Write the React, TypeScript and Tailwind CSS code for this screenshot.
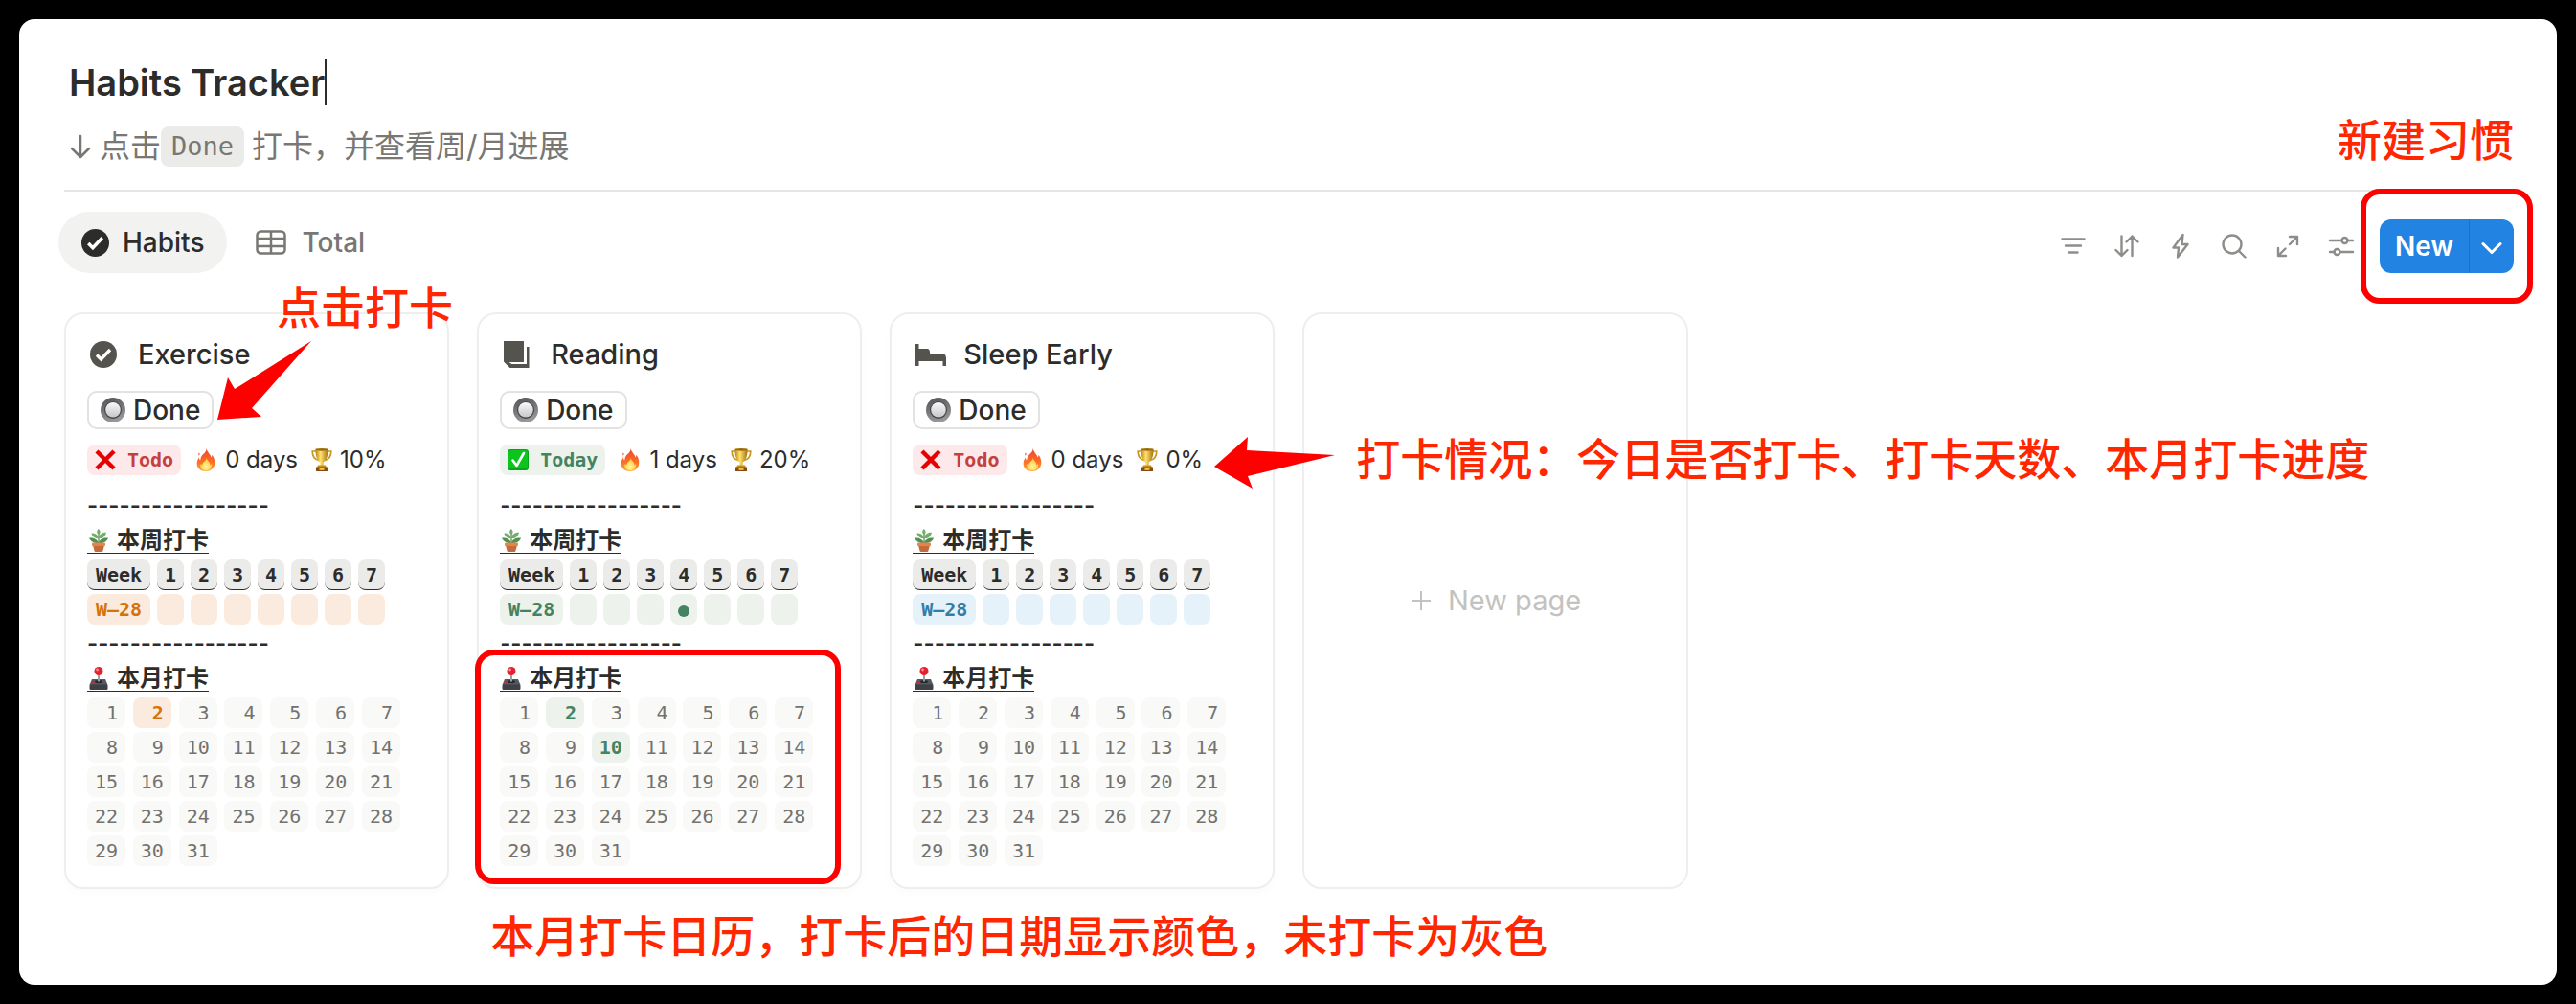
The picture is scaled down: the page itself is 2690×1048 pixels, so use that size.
import React from 'react';

type Tone = 'orange' | 'green' | 'blue';

interface Habit {
  name: string;
  icon: 'check' | 'book' | 'bed';
  done: boolean;
  days: number;
  progress: string;
  tone: Tone;
  weekMarks: number[];
  monthMarks: number[];
}

const habits: Habit[] = [
  { name: 'Exercise', icon: 'check', done: false, days: 0, progress: '10%', tone: 'orange', weekMarks: [], monthMarks: [2] },
  { name: 'Reading', icon: 'book', done: true, days: 1, progress: '20%', tone: 'green', weekMarks: [4], monthMarks: [2, 10] },
  { name: 'Sleep Early', icon: 'bed', done: false, days: 0, progress: '0%', tone: 'blue', weekMarks: [], monthMarks: [] },
];

const toneClass: Record<Tone, string> = {
  orange: 'bg-[#fbebde] text-[#d5730b]',
  green: 'bg-[#edf3ec] text-[#448361]',
  blue: 'bg-[#e5f2f9] text-[#337ea9]',
};

const weekDays = [1, 2, 3, 4, 5, 6, 7];
const monthDays = Array.from({ length: 31 }, (_, i) => i + 1);

const sans = "font-['Inter','Noto_Sans_CJK_SC',sans-serif]";
const mono = "font-['DejaVu_Sans_Mono','Noto_Sans_CJK_SC',monospace]";
const note = "font-['Noto_Sans_CJK_SC',sans-serif] text-[46px] leading-[56px] font-medium whitespace-nowrap text-[#ff2600]";

function CheckCircle({ className }: { className: string }) {
  return (
    <svg viewBox="0 0 28 28" className={className} aria-hidden="true">
      <circle cx="14" cy="14" r="14" fill="currentColor" />
      <path d="M7 14.500l4.500 4.500L21 9" fill="none" stroke="#fff" strokeWidth="3.400" />
    </svg>
  );
}

function HabitIcon({ icon }: { icon: Habit['icon'] }) {
  if (icon === 'check') return <CheckCircle className="h-7 w-7 text-[#55534e]" />;
  if (icon === 'book')
    return (
      <svg viewBox="0 0 28 28" className="h-7 w-7" fill="#55534e" aria-hidden="true">
        <path d="M1 0h21v22H6.500l3 2H25V6h2.500v22H7.500L1 21.500z" />
      </svg>
    );
  return (
    <svg viewBox="0 0 32 28" className="h-7 w-8" fill="#55534e" aria-hidden="true">
      <path d="M0 3h3.500v5H12c2 0 3 1.200 3.200 5H27c3.500 0 5 1.500 5 5v8h-3.500v-5H3.500v5H0z" />
    </svg>
  );
}

function RadioEmoji() {
  return (
    <svg viewBox="0 0 26 26" className="h-[26px] w-[26px]" aria-hidden="true">
      <defs>
        <linearGradient id="ring" x1="0" y1="0" x2="0.3" y2="1">
          <stop offset="0" stopColor="#505052" />
          <stop offset="1" stopColor="#98989b" />
        </linearGradient>
        <linearGradient id="knob" x1="0" y1="0" x2="0" y2="1">
          <stop offset="0" stopColor="#fafafa" />
          <stop offset="1" stopColor="#c6c6c9" />
        </linearGradient>
      </defs>
      <circle cx="13" cy="13" r="13" fill="url(#ring)" />
      <circle cx="13" cy="13" r="9" fill="#47474a" />
      <circle cx="13" cy="12.700" r="7.800" fill="url(#knob)" />
    </svg>
  );
}

function CrossEmoji() {
  return (
    <svg viewBox="0 0 22 22" className="h-[22px] w-[22px]" aria-hidden="true">
      <path d="M2 2l18 18M20 2L2 20" stroke="#e60000" strokeWidth="4.400" fill="none" />
    </svg>
  );
}

function TickEmoji() {
  return (
    <svg viewBox="0 0 22 22" className="h-[22px] w-[22px]" aria-hidden="true">
      <rect width="22" height="22" rx="3" fill="#06a51a" />
      <rect x="1" y="1" width="20" height="19" rx="2.500" fill="#0bc41c" />
      <path d="M5.500 11.500l4 5.500 7.500-13" fill="none" stroke="#fff" strokeWidth="2.600" strokeLinecap="round" strokeLinejoin="round" />
    </svg>
  );
}

function FireEmoji() {
  return (
    <svg viewBox="0 0 20 24" className="h-6 w-5" aria-hidden="true">
      <defs>
        <linearGradient id="flame" x1="0" y1="0" x2="0" y2="1">
          <stop offset="0" stopColor="#f0432a" />
          <stop offset="0.600" stopColor="#fb6f27" />
          <stop offset="1" stopColor="#ffab35" />
        </linearGradient>
        <radialGradient id="core" cx="0.500" cy="0.700" r="0.600">
          <stop offset="0" stopColor="#fff6a0" />
          <stop offset="1" stopColor="#ffc93c" />
        </radialGradient>
      </defs>
      <path d="M10.500 0c1.200 4.500 4.300 6 5.200 9.500.6-.8.800-1.600.6-2.800 2.300 2.500 3.400 6 2.900 9.600C18.600 21 15 24 10 24S1 21.300.7 16.500c-.2-3 .8-5 2.200-7 .1 1.500.5 2.300 1.300 3C4.800 9.500 4.900 8.500 7 6.300 9 4.300 10.800 3 10.500 0z" fill="url(#flame)" />
      <path d="M3 4.500c.8 1 .7 2-.2 3-.9-1-.7-2 .2-3z" fill="#f0432a" />
      <path d="M10.800 10c.3 3 3.600 3.800 3.700 7.500.7-.4 1-1 1.200-1.800 1 3.800-1 7.500-5.500 7.500S3.600 19.800 4.400 16c.5.900.9 1.300 1.700 1.600C6.500 14 10 13.500 10.800 10z" fill="url(#core)" />
    </svg>
  );
}

function TrophyEmoji() {
  return (
    <svg viewBox="0 0 22 24" className="h-6 w-[22px]" aria-hidden="true">
      <defs>
        <linearGradient id="gold" x1="0" y1="0" x2="1" y2="0">
          <stop offset="0" stopColor="#b98310" />
          <stop offset="0.400" stopColor="#ffe36d" />
          <stop offset="1" stopColor="#a8700c" />
        </linearGradient>
      </defs>
      <path d="M5 3H1.200c0 5 2 8.500 6.800 9.500M17 3h3.800c0 5-2 8.500-6.800 9.500" fill="none" stroke="#c9951c" strokeWidth="1.700" />
      <path d="M4.500.5h13c.3 7-1.500 12.500-4.800 14v3.500H9.300v-3.500C6 13 4.200 7.500 4.500.5z" fill="url(#gold)" />
      <ellipse cx="11" cy="1.400" rx="6.500" ry="1.300" fill="#9b6a0d" />
      <path d="M7 17.500h8l1 2.500H6z" fill="#c58f1a" />
      <path d="M5 19.500h12V24H5z" fill="#8a4b16" />
      <path d="M8.500 20.800h5v2h-5z" fill="#f0c84a" />
    </svg>
  );
}

function PlantEmoji() {
  return (
    <svg viewBox="0 0 22 24" className="h-6 w-[22px]" aria-hidden="true">
      <path d="M11 16V3" stroke="#4f8a48" strokeWidth="1.200" />
      <g fill="#74ad68">
        <path d="M11 6C8.500 4.500 8.800 1.800 10.800 0c2.200 1.800 2.500 4.500.2 6z" />
        <path d="M11 10C8 10.500 4.500 9 3.500 4.500 7.500 4.300 10.500 6.500 11 10z" />
        <path d="M11 10c.3-4 3.200-6.500 8-6.300C18 8 15 10.500 11 10z" />
      </g>
      <g fill="#4f9150">
        <path d="M11 15C7.500 15.500 3 14 1 9.500c4.500-.5 9 1.500 10 5.500z" />
        <path d="M11 15c.5-4 5-6 10-5.500C19.500 14 15 15.500 11 15z" />
      </g>
      <path d="M5 17h12l-1.600 6.200c-.2.500-.5.800-1 .8H7.600c-.5 0-.8-.3-1-.8z" fill="#c66a38" />
      <rect x="4" y="14.500" width="14" height="3.500" rx="1" fill="#e08550" />
    </svg>
  );
}

function JoystickEmoji() {
  return (
    <svg viewBox="0 0 22 24" className="h-6 w-[22px]" aria-hidden="true">
      <path d="M4 13h14l2.500 6H1.500z" fill="#55595f" />
      <rect x="1.500" y="18.500" width="19" height="5.500" rx="1.200" fill="#3d4147" />
      <ellipse cx="11" cy="15.500" rx="4" ry="1.500" fill="#26282b" />
      <path d="M10 8h2v7.500h-2z" fill="#9a9da1" />
      <circle cx="11" cy="4.500" r="4.500" fill="#e3222f" />
      <circle cx="9.600" cy="3" r="1.400" fill="#ff8d8d" />
      <ellipse cx="5" cy="17" rx="1.700" ry="1" fill="#e3222f" />
    </svg>
  );
}

function SectionTitle({ icon, children }: { icon: React.ReactNode; children: React.ReactNode }) {
  return (
    <div className="flex h-9 items-center">
      <h3 className="flex items-center gap-2 border-b border-[#2c2c2b] pl-px text-2xl leading-[26px] font-bold">
        {icon}
        {children}
      </h3>
    </div>
  );
}

function Dashes() {
  return <div className="h-9 text-2xl leading-9 font-semibold">-----------------</div>;
}

function HabitCard({ habit, children, monthNote }: { habit: Habit; children?: React.ReactNode; monthNote?: React.ReactNode }) {
  const tone = toneClass[habit.tone];
  return (
    <article className="relative rounded-[20px] border-2 border-[#eeeeed] bg-white p-[22px] pb-5 shadow-[0_4px_10px_rgba(0,0,0,0.02)]">
      <h2 className="flex h-10 items-center text-[29px] leading-10 font-medium">
        <span className="ml-[3px] flex w-[50px]">
          <HabitIcon icon={habit.icon} />
        </span>
        {habit.name}
      </h2>
      <button type="button" className="mt-[18px] flex h-10 items-center gap-2 rounded-[10px] border-2 border-[#e3e2e0] px-3 text-[28px] leading-9 font-medium">
        <RadioEmoji />
        Done
      </button>
      <div className="mt-[14px] flex h-9 items-center text-2xl leading-9">
        <span
          className={`${mono} flex h-8 items-center gap-3 rounded-lg px-2 text-xl leading-8 font-bold ${
            habit.done ? 'bg-[#edf3ec] text-[#448361]' : 'bg-[#fde9ea] text-[#c4403d]'
          }`}
        >
          {habit.done ? <TickEmoji /> : <CrossEmoji />}
          {habit.done ? 'Today' : 'Todo'}
        </span>
        <span className="ml-4 flex items-center gap-[10px]">
          <FireEmoji />
          {habit.days} days
        </span>
        <span className="ml-[14px] flex items-center gap-2">
          <TrophyEmoji />
          {habit.progress}
        </span>
      </div>
      <div className="mt-3">
        <Dashes />
        <SectionTitle icon={<PlantEmoji />}>本周打卡</SectionTitle>
        <table className={`${mono} -mx-[7px] border-separate border-spacing-x-[7px] border-spacing-y-0 text-center text-xl leading-8 font-bold`}>
          <thead>
            <tr className="h-9">
              <th scope="col" className="p-0">
                <span className="block h-8 w-[66px] rounded-lg border-b border-[#2c2c2b] bg-[#ebebea]">Week</span>
              </th>
              {weekDays.map((d) => (
                <th key={d} scope="col" className="p-0">
                  <span className="block h-8 w-7 rounded-lg border-b border-[#2c2c2b] bg-[#ebebea]">{d}</span>
                </th>
              ))}
            </tr>
          </thead>
          <tbody>
            <tr className="h-9">
              <th scope="row" className="p-0">
                <span className={`block h-8 w-[66px] rounded-lg ${tone}`}>W–28</span>
              </th>
              {weekDays.map((d) => (
                <td key={d} className="p-0">
                  <span className={`flex h-8 w-7 items-center justify-center rounded-lg ${tone}`}>
                    {habit.weekMarks.includes(d) && <span className="mt-1 h-3 w-3 rounded-full bg-current" />}
                  </span>
                </td>
              ))}
            </tr>
          </tbody>
        </table>
        <Dashes />
        <div className="relative">
          <SectionTitle icon={<JoystickEmoji />}>本月打卡</SectionTitle>
          <ol className={`${mono} grid w-[327px] grid-cols-[repeat(7,40px)] justify-between text-right text-xl leading-8`}>
            {monthDays.map((d) => (
              <li key={d} className="flex h-9 items-center">
                <span className={`h-8 w-10 rounded-lg px-2 ${habit.monthMarks.includes(d) ? `font-bold ${tone}` : 'bg-[#f9f9f8] text-[#73726e]'}`}>
                  {d}
                </span>
              </li>
            ))}
          </ol>
          {monthNote}
        </div>
      </div>
      {children}
    </article>
  );
}

const toolIcons: { label: string; drawing: React.ReactNode }[] = [
  { label: 'Filter', drawing: <path d="M2.500 6.500h23M6 13.500h16M9.500 20.500h9" /> },
  {
    label: 'Sort',
    drawing: <path d="M8.500 3.500v20.500M2.500 18l6 6 6-6M19.500 24V3.500M13.500 9.500l6-6 6 6" />,
  },
  { label: 'Automations', drawing: <path d="M16.500 2L6.500 15.500H12L11 25.500L21.500 12H15.500z" /> },
  {
    label: 'Search',
    drawing: (
      <>
        <circle cx="12" cy="12" r="9.500" />
        <path d="M19 19l6.500 6.500" />
      </>
    ),
  },
  {
    label: 'Expand',
    drawing: <path d="M16 12L24 4M16 4h8v8M11.500 16.500L4 24M12 24H4v-8" />,
  },
  {
    label: 'Settings',
    drawing: (
      <>
        <path d="M2 8h11.500M20.500 8h5.500M2 20h4.500M12.500 20h13.500" />
        <circle cx="17.500" cy="8" r="3" />
        <circle cx="9.500" cy="20" r="3" />
      </>
    ),
  },
];

export default function App() {
  return (
    <div className={`${sans} flex min-h-screen bg-black p-5 text-[#2c2c2b]`}>
      <main className="min-w-0 flex-1 rounded-2xl bg-white pt-10 pr-[45px] pb-[97px] pl-[47px]">
        <header className="border-b-2 border-[#e6e6e5] pb-6">
          <h1 className="flex h-[52px] items-center pl-[5px] text-[38px] leading-[52px] font-semibold">
            Habits Tracker
            <span className="h-12 w-[2px] bg-[#2c2c2b]" />
          </h1>
          <p className="mt-5 flex h-[42px] items-center pl-[5px] text-[32px] leading-[42px] text-[#787774]">
            <svg viewBox="0 0 24 28" className="mr-2 h-7 w-6" fill="none" stroke="currentColor" strokeWidth="2.500" strokeLinecap="round" strokeLinejoin="round" aria-hidden="true">
              <path d="M12 3v22M3 16l9 9 9-9" />
            </svg>
            点击
            <code className={`${mono} mr-2 h-[42px] rounded-lg bg-[#ebebea] px-[11px] text-[27px]`}>Done</code>
            打卡，并查看周/月进展
          </p>
        </header>

        <div className="mt-[21px] flex h-16 justify-between">
          <nav className="-ml-[6px] flex text-[28px] leading-9 font-medium">
            <a href="#habits" aria-current="page" className="flex h-16 items-center gap-[14px] rounded-full bg-[#f2f2f1] px-6">
              <CheckCircle className="h-[29px] w-[29px]" />
              Habits
            </a>
            <a href="#total" className="flex h-16 items-center gap-4 px-[30px] text-[#787774]">
              <svg viewBox="0 0 32 26" className="h-[26px] w-8" fill="none" stroke="currentColor" strokeWidth="2.500" aria-hidden="true">
                <rect x="1.500" y="1.500" width="29" height="23" rx="4" />
                <path d="M1.500 9h29M1.500 17h29M16 1.500v23" />
              </svg>
              Total
            </a>
          </nav>
          <div className="flex items-end">
            {toolIcons.map((t) => (
              <button key={t.label} type="button" aria-label={t.label} className="flex h-14 w-14 items-center justify-center text-[#8e8d8a]">
                <svg viewBox="0 0 28 28" className="h-7 w-7" fill="none" stroke="currentColor" strokeWidth="2.400" strokeLinecap="round" strokeLinejoin="round" aria-hidden="true">
                  {t.drawing}
                </svg>
              </button>
            ))}
            <div className="relative ml-3 flex h-14 text-white">
              <button type="button" className="rounded-l-xl bg-[#2383e2] px-4 text-[28px] leading-9 font-semibold">
                New
              </button>
              <button type="button" aria-label="More options" className="flex items-center rounded-r-xl border-l border-[#1d70c4] bg-[#2383e2] px-[11px]">
                <svg viewBox="0 0 24 24" className="mt-1 h-6 w-6" fill="none" stroke="currentColor" strokeWidth="3" strokeLinecap="round" strokeLinejoin="round" aria-hidden="true">
                  <path d="M3 7.500l9 9 9-9" />
                </svg>
              </button>
              <span className="pointer-events-none absolute -inset-x-5 -top-8 -bottom-8 rounded-[20px] border-[6px] border-[#ff0000]" />
              <span className={`absolute right-0 bottom-[114px] ${note}`}>新建习惯</span>
            </div>
          </div>
        </div>

        <section className="mt-[41px] grid grid-cols-[repeat(auto-fill,minmax(380px,1fr))] gap-[29px]">
          <HabitCard habit={habits[0]}>
            <span className={`absolute -top-[38px] left-[220px] ${note}`}>点击打卡</span>
            <svg viewBox="0 0 98 82" className="absolute top-[28px] left-[158px] h-[82px] w-[98px]" fill="#ff0000" aria-hidden="true">
              <path d="M98 0L18 50L11 38L0 82L46 79L36 70z" />
            </svg>
          </HabitCard>
          <HabitCard
            habit={habits[1]}
            monthNote={<span className="pointer-events-none absolute -top-3 -left-[26px] h-[245px] w-[382px] rounded-[20px] border-[6px] border-[#ff0000]" />}
          >
            <span className={`absolute top-full left-3 mt-5 ${note}`}>本月打卡日历，打卡后的日期显示颜色，未打卡为灰色</span>
          </HabitCard>
          <HabitCard habit={habits[2]}>
            <div className="absolute top-[120px] left-[337px] z-10 flex items-start gap-[22px]">
              <svg viewBox="0 0 126 54" className="mt-2 h-[54px] w-[126px] shrink-0" fill="#ff0000" aria-hidden="true">
                <path d="M0 31L35 0L34 14L126 19L35 41L40 54z" />
              </svg>
              <span className={note}>打卡情况：今日是否打卡、打卡天数、本月打卡进度</span>
            </div>
          </HabitCard>
          <button type="button" className="flex items-center justify-center gap-4 rounded-[20px] border-2 border-[#eeeeed] text-[29px] leading-10 text-[#c3c2bf]">
            <svg viewBox="0 0 24 24" className="h-6 w-6" stroke="currentColor" strokeWidth="2" aria-hidden="true">
              <path d="M12 2v20M2 12h20" />
            </svg>
            New page
          </button>
        </section>
      </main>
    </div>
  );
}
